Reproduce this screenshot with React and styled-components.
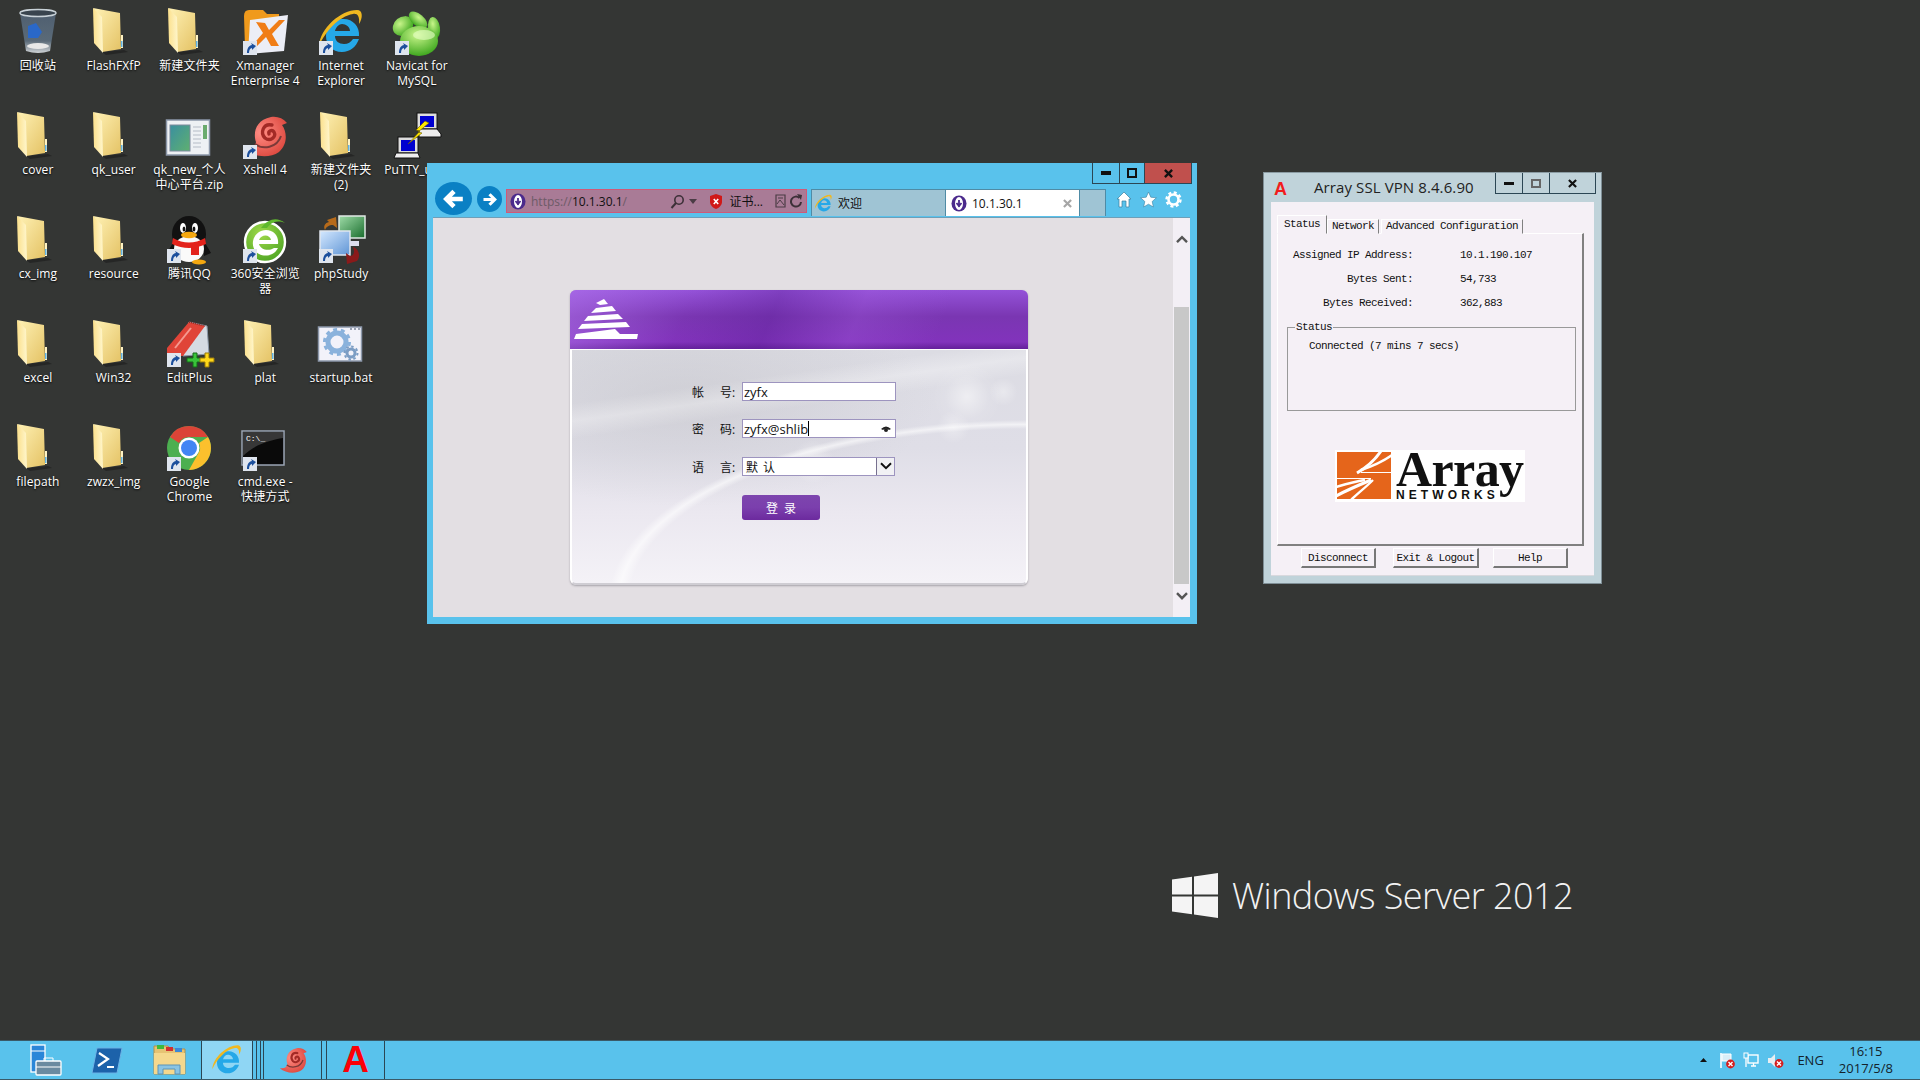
import React from 'react'
import styled, { createGlobalStyle } from 'styled-components'

const UI_FONT = `"Open Sans", "Noto Sans CJK SC", sans-serif`
const DLG_FONT = `"Liberation Mono", "Noto Sans CJK SC", monospace`

const GlobalStyle = createGlobalStyle`
  html, body { margin: 0; padding: 0; background: #343634; }
  #root { width: 1920px; height: 1080px; overflow: hidden; }
`

/* ---------- shell ---------- */
const Screen = styled.div`
  width: 1920px;
  height: 1080px;
  display: flex;
  flex-direction: column;
  font-family: ${UI_FONT};
`
const Desktop = styled.div`
  position: relative;
  flex: 1;
  padding-top: 8px;
  background: #343634;
`
const IconRow = styled.div`
  display: grid;
  grid-template-columns: repeat(6, 75.8px);
  height: 104px;
`
const IconCell = styled.div`
  display: flex;
  flex-direction: column;
  align-items: center;
`
const IconBox = styled.div`
  width: 48px;
  height: 48px;
  svg { display: block; overflow: visible; }
`
const IconLabel = styled.div`
  margin-top: 2px;
  font-size: 12px;
  line-height: 15px;
  letter-spacing: 0.1px;
  color: #fff;
  text-align: center;
  white-space: pre;
  text-shadow: 0 1px 2px #000;
`

/* ---------- browser ---------- */
const BrowserWindow = styled.div`
  position: absolute;
  left: 427px;
  top: 163px;
  width: 770px;
  height: 461px;
  box-sizing: border-box;
  padding: 0 7px 7px 6px;
  display: flex;
  flex-direction: column;
  background: #59c2ec;
  z-index: 2;
`
const CaptionRow = styled.div`
  height: 19px;
  display: flex;
  justify-content: flex-end;
  margin-right: -2px;
`
const CaptionButton = styled.div`
  width: ${p => p.$w}px;
  height: ${p => p.$h || 21}px;
  box-sizing: border-box;
  display: flex;
  align-items: center;
  justify-content: center;
  border: 1px solid #2b4654;
  border-top: 0;
  border-left-width: ${p => (p.$first ? 1 : 0)}px;
  background: ${p => p.$bg || 'transparent'};
`
const Toolbar = styled.div`
  height: 35px;
  display: flex;
  align-items: flex-start;
  padding-left: 2px;
`
const RoundNav = styled.div`
  flex: none;
  width: ${p => p.$w}px;
  height: ${p => p.$h}px;
  margin-top: ${p => p.$top}px;
  margin-right: ${p => p.$gap}px;
  border-radius: 50%;
  background: #0a80c4;
  display: flex;
  align-items: center;
  justify-content: center;
`
const AddressBar = styled.div`
  flex: none;
  width: 301px;
  height: 24px;
  margin-top: 7px;
  box-sizing: border-box;
  padding: 0 4px 0 3px;
  display: flex;
  align-items: center;
  background: #a97b96;
  border: 1px solid #d05a78;
  font-size: 12px;
`
const UrlScheme = styled.span`
  margin-left: 5px;
  color: #6d5a66;
`
const UrlHost = styled.span`
  color: #111;
`
const UrlRest = styled.span`
  color: #6d5a66;
`
const AddressTools = styled.div`
  margin-left: auto;
  display: flex;
  align-items: center;
  gap: 4px;
`
const ToolSpacer = styled.span`
  width: 5px;
`
const CertText = styled.span`
  margin: 0 8px 0 4px;
  color: #111;
  white-space: nowrap;
`
const TabStrip = styled.div`
  flex: none;
  display: flex;
  height: 27px;
  margin: 7px 10px 0 4px;
  font-size: 12px;
`
const Tab = styled.div`
  flex: none;
  width: ${p => p.$w}px;
  box-sizing: border-box;
  display: flex;
  align-items: center;
  gap: 5px;
  padding-left: ${p => p.$pad || 0}px;
  background: ${p => (p.$active ? '#fff' : '#9fc4d4')};
  border: 1px solid #4f8ba5;
  border-bottom: 0;
  border-left-width: ${p => (p.$noLeft ? 0 : 1)}px;
  color: #111;
`
const TabClose = styled.span`
  margin-left: auto;
  margin-right: 7px;
  display: flex;
`
const ToolIcons = styled.div`
  display: flex;
  align-items: center;
  gap: 8px;
  margin-top: 9px;
`
const BrowserBody = styled.div`
  flex: 1;
  display: flex;
  min-height: 0;
  border-top: 1px solid #6e9fb8;
`
const Viewport = styled.div`
  flex: 1;
  padding: 72px 0 0 137px;
  background: #e3dfe3;
`
const ScrollBar = styled.div`
  width: 17px;
  display: flex;
  flex-direction: column;
  align-items: center;
  background: #f3eff5;
`
const ScrollArrow = styled.div`
  height: ${p => p.$h}px;
  box-sizing: border-box;
  padding-top: ${p => p.$pad}px;
  display: flex;
  align-items: flex-start;
  flex: none;
`
const ScrollThumb = styled.div`
  width: 15px;
  height: 277px;
  background: #c8c8c8;
`

/* ---------- login card ---------- */
const LoginCard = styled.div`
  width: 458px;
  height: 295px;
  display: flex;
  flex-direction: column;
  border-radius: 6px;
  box-shadow: 0 1px 2px rgba(90, 90, 100, 0.45);
  overflow: hidden;
`
const CardHeader = styled.div`
  height: 60px;
  flex: none;
  box-sizing: border-box;
  padding: 9px 0 0 4px;
  background:
    linear-gradient(112deg, rgba(180, 120, 240, 0.55) 0, rgba(180, 120, 240, 0) 26%, rgba(90, 30, 150, 0.35) 44%, rgba(160, 90, 220, 0.3) 62%, rgba(90, 30, 150, 0) 80%),
    linear-gradient(180deg, #9452d8 0, #7a36b2 45%, #8233bc 88%, #64209a 100%);
  border-bottom: 1px solid #fff;
`
const CardBody = styled.div`
  flex: 1;
  box-sizing: border-box;
  padding: 32px 0 0 120px;
  display: flex;
  flex-direction: column;
  border: 2px solid #fff;
  border-top: 0;
  border-bottom-color: #cfcdd3;
  border-radius: 0 0 6px 6px;
  background:
    radial-gradient(circle at 87% 20%, rgba(255, 255, 255, 0.5) 0, rgba(255, 255, 255, 0.08) 5%, transparent 8%),
    radial-gradient(circle at 95% 18%, rgba(255, 255, 255, 0.35) 0, transparent 3%),
    radial-gradient(circle at 84% 33%, rgba(255, 255, 255, 0.35) 0, transparent 4%),
    radial-gradient(circle at 53% 48%, rgba(255, 255, 255, 0.45) 0, transparent 8%),
    radial-gradient(ellipse 92% 78% at 100% 108%, transparent 95%, rgba(255, 255, 255, 0.6) 97.5%, transparent 100%),
    linear-gradient(172deg, transparent 18%, rgba(255, 255, 255, 0.3) 24%, transparent 30%),
    radial-gradient(ellipse 55% 45% at 25% 22%, rgba(190, 190, 195, 0.45) 0, transparent 100%),
    linear-gradient(180deg, #dcdce3 0, #dfdee7 42%, #ebe8f0 70%, #f4f2f7 100%);
`
const FormRow = styled.div`
  display: flex;
  align-items: center;
  height: ${p => p.$h || 19}px;
  margin-bottom: ${p => p.$mb}px;
`
const FormLabel = styled.div`
  width: 50px;
  flex: none;
  font-size: 12px;
  word-spacing: 13px;
  color: #111;
  white-space: nowrap;
`
const Field = styled.div`
  box-sizing: border-box;
  width: ${p => p.$w}px;
  height: 100%;
  display: flex;
  align-items: center;
  padding-left: 1px;
  background: #fff;
  border: 1px solid #9d94bf;
  font-size: 13px;
  color: #111;
`
const Caret = styled.span`
  width: 1px;
  height: 15px;
  background: #000;
`
const EyeWrap = styled.span`
  margin-left: auto;
  margin-right: 4px;
  display: flex;
`
const SelectText = styled.span`
  margin-left: 2px;
  flex: 1;
  font-size: 12px;
  word-spacing: 2px;
`
const SelectArrow = styled.span`
  width: 18px;
  height: 100%;
  box-sizing: border-box;
  display: flex;
  align-items: center;
  justify-content: center;
  background: #f1f1f4;
  border-left: 1px solid #77708f;
`
const LoginButton = styled.div`
  width: 78px;
  height: 25px;
  margin-left: 50px;
  display: flex;
  align-items: center;
  justify-content: center;
  border-radius: 3px;
  background: linear-gradient(180deg, #7d45ae 0, #7b3fad 50%, #6c2a9e 100%);
  color: #fff;
  font-size: 12px;
  word-spacing: 3px;
`

/* ---------- vpn dialog ---------- */
const VpnWindow = styled.div`
  position: absolute;
  left: 1263px;
  top: 172px;
  width: 339px;
  height: 412px;
  box-sizing: border-box;
  display: flex;
  flex-direction: column;
  padding: 0 7px 7px;
  background: #c0d3da;
  border: 1px solid #7f8f96;
  border-top-color: #8b9ca3;
`
const VpnTitleBar = styled.div`
  height: 29px;
  flex: none;
  display: flex;
  align-items: flex-start;
  margin-right: -2px;
`
const VpnA = styled.span`
  width: 14px;
  margin: 6px 0 0 3px;
  font: bold 18px/20px "Liberation Sans", sans-serif;
  color: #f21c1c;
`
const VpnTitle = styled.span`
  margin: 4px 0 0 26px;
  font-size: 15px;
  line-height: 20px;
  letter-spacing: 0.1px;
  color: #222;
`
const VpnCaption = styled.div`
  margin-left: auto;
  display: flex;
`
const VpnClient = styled.div`
  flex: 1;
  box-sizing: border-box;
  padding: 13px 0 0 6px;
  background: #f5f0f6;
  font-family: ${DLG_FONT};
  font-size: 11px;
  letter-spacing: -0.6px;
  color: #111;
  border-bottom: 1px solid #d9d9de;
`
const VpnTabs = styled.div`
  display: flex;
  align-items: flex-end;
  height: 19px;
  margin-bottom: -1px;
  position: relative;
`
const VpnTab = styled.div`
  box-sizing: border-box;
  width: ${p => p.$w}px;
  height: ${p => (p.$active ? 19 : 15)}px;
  margin-right: ${p => p.$gap || 0}px;
  padding-left: ${p => (p.$active ? 6 : 4)}px;
  line-height: ${p => (p.$active ? 16 : 13)}px;
  white-space: nowrap;
  border: 1px solid;
  border-color: #fff #808080 transparent #fff;
  background: #f5f0f6;
`
const VpnPanel = styled.div`
  width: 307px;
  height: 313px;
  box-sizing: border-box;
  padding-top: 12px;
  border: 1px solid;
  border-color: #fff #808080 #808080 #fff;
  border-width: 1px 2px 2px 1px;
`
const StatRow = styled.div`
  display: grid;
  grid-template-columns: 135px 1fr;
  column-gap: 47px;
  height: 18px;
  line-height: 18px;
  margin-bottom: 6px;
`
const StatName = styled.div`
  text-align: right;
`
const GroupBox = styled.div`
  position: relative;
  width: 289px;
  height: 84px;
  margin: 15px 0 0 9px;
  box-sizing: border-box;
  padding: 9px 0 0 21px;
  line-height: 18px;
  border: 1px solid #999;
`
const GroupLegend = styled.span`
  position: absolute;
  left: 7px;
  top: -10px;
  padding: 0 1px;
  background: #f5f0f6;
`
const ArrayLogo = styled.div`
  width: 190px;
  height: 52px;
  margin: 39px 0 0 57px;
  box-sizing: border-box;
  padding: 2px 0 0 2px;
  display: flex;
  gap: 5px;
  background: #fff;
`
const LogoWords = styled.div`
  display: flex;
  flex-direction: column;
`
const LogoArray = styled.span`
  font: bold 50px/34px "Liberation Serif", serif;
  height: 34px;
  color: #111;
`
const LogoNetworks = styled.span`
  margin-top: 3px;
  font: bold 12px/12px "Liberation Sans", sans-serif;
  letter-spacing: 4.1px;
  color: #111;
`
const DialogButtons = styled.div`
  display: flex;
  margin: 2px 0 0 24px;
`
const DialogButton = styled.div`
  box-sizing: border-box;
  width: ${p => p.$w}px;
  height: 20px;
  margin-right: ${p => p.$gap || 0}px;
  display: flex;
  align-items: center;
  justify-content: center;
  white-space: nowrap;
  background: #f5f0f6;
  border: 1px solid;
  border-color: #fff #777 #777 #fff;
  border-width: 1px 2px 2px 1px;
`

/* ---------- wallpaper mark ---------- */
const Watermark = styled.div`
  position: absolute;
  left: 1172px;
  top: 873px;
  display: flex;
  align-items: center;
  gap: 12px;
`
const WatermarkText = styled.span`
  font-family: "Open Sans", sans-serif;
  font-weight: 300;
  font-size: 36px;
  line-height: 46px;
  letter-spacing: -0.55px;
  color: #f2f2f2;
  white-space: nowrap;
`

/* ---------- taskbar ---------- */
const Taskbar = styled.div`
  height: 40px;
  flex: none;
  box-sizing: border-box;
  display: flex;
  background: #59c2ec;
  border-top: 1px solid #3a5a68;
  border-bottom: 1px solid #3a5a68;
`
const PinnedIcons = styled.div`
  display: flex;
  padding-left: 15px;
`
const PinnedIcon = styled.div`
  width: 62px;
  display: flex;
  align-items: center;
  justify-content: center;
`
const TaskButton = styled.div`
  flex: none;
  width: ${p => p.$w}px;
  margin-right: ${p => p.$gap || 0}px;
  box-sizing: border-box;
  display: flex;
  align-items: center;
  justify-content: center;
  border-left: 1px solid #2b4654;
  border-right: ${p => (p.$last ? '1px solid #2b4654' : 0)};
  background: ${p => (p.$active ? '#8fd6f4' : 'transparent')};
`
const TaskA = styled.span`
  font: bold 37px/38px "Liberation Sans", sans-serif;
  color: #fb0007;
`
const Tray = styled.div`
  margin-left: auto;
  display: flex;
  align-items: center;
  padding-right: 27px;
  font-size: 13px;
  color: #14232b;
`
const TrayIcons = styled.div`
  display: flex;
  align-items: center;
  gap: 8px;
`
const TrayCaretWrap = styled.span`
  display: flex;
  margin-right: 4px;
`
const TrayLang = styled.span`
  margin: 0 15px 0 13px;
`
const Clock = styled.div`
  text-align: center;
  line-height: 17px;
`

/* ---------- icon drawings ---------- */
const Shortcut = () => (
  <g>
    <rect x="2" y="33" width="14" height="14" fill="#dfe5ee" />
    <path d="M6 45 C6 40 8 37.5 11 37 L10 35 L15 38 L11 42 L11 40 C9 40.5 8 42 8 45 Z" fill="#1c4f9c" />
  </g>
)

const Art = ({ size = 48, view = '0 0 48 48', shortcut, children }) => (
  <svg width={size} height={size} viewBox={view}>
    {children}
    {shortcut && <Shortcut />}
  </svg>
)

const FolderIcon = () => (
  <Art>
    <defs>
      <linearGradient id="fd" x1="0" y1="0" x2="1" y2="1">
        <stop offset="0" stopColor="#fff2b6" />
        <stop offset="1" stopColor="#e4c264" />
      </linearGradient>
      <linearGradient id="ff" x1="0" y1="0" x2="1" y2="0">
        <stop offset="0" stopColor="#fbe08c" />
        <stop offset="1" stopColor="#fff6cc" />
      </linearGradient>
    </defs>
    <polygon points="12,44 34,42 38,44 16,47" fill="#1f201f" opacity="0.7" />
    <polygon points="3,0 30,5 31,41 12,44 10,10" fill="url(#fd)" />
    <polygon points="3,0 12,9 13,45 4,35" fill="url(#ff)" />
    <rect x="31" y="27" width="2" height="13" fill="#fff3c4" />
    <rect x="31" y="33" width="1.5" height="6" fill="#5fb2e8" />
  </Art>
)

const RecycleIcon = () => (
  <Art>
    <defs>
      <linearGradient id="rb" x1="0" y1="0" x2="0" y2="1">
        <stop offset="0" stopColor="#4f5f70" />
        <stop offset="0.7" stopColor="#5a6a78" />
        <stop offset="1" stopColor="#cfd3d6" />
      </linearGradient>
    </defs>
    <path d="M6 5 L42 5 L36 43 Q24 47 12 43 Z" fill="url(#rb)" />
    <ellipse cx="24" cy="5" rx="18" ry="3.5" fill="#39444e" stroke="#c9d2d8" strokeWidth="1.4" />
    <path d="M14 18 L22 15 L28 24 L24 30 L14 30 Z" fill="#2a68c8" />
    <ellipse cx="24" cy="38" rx="11" ry="3" fill="#e8e8e8" />
  </Art>
)

const XmanagerIcon = ({ size, shortcut = true }) => (
  <Art size={size} shortcut={shortcut}>
    <path d="M3 8 Q3 2 8 2 L22 2 L26 6 L38 6 L38 38 L4 40 Z" fill="#f09a1c" />
    <polygon points="9,12 47,7 43,43 7,46" fill="#eceef6" />
    <path d="M15 14 L24 15 L28 22 L38 12 L44 12 L31 26 L38 38 L30 38 L25 29 L15 39 L10 39 L22 25 Z" fill="#f07d16" />
  </Art>
)

const IeIcon = ({ size = 48, shortcut = true }) => (
  <Art size={size} shortcut={shortcut}>
    <path d="M25 11 C35 10 43 18 42 28 L18 28 C18 33 22 36 27 36 C31 36 34 34 36 31 L42 31 C39 39 33 44 25 44 C15 44 9 37 9 28 C9 18 16 11 25 11 Z M18 23 L33 23 C33 19 29 16 25 16 C22 16 19 19 18 23 Z" fill="#25a8e8" fillRule="evenodd" />
    <path d="M2 38 C3 20 24 2 40 2 C46 2 46 10 42 16 C43 8 40 5 36 6 C22 8 8 24 2 38 Z" fill="#f0b820" />
  </Art>
)

const NavicatIcon = ({ shortcut = true }) => (
  <Art shortcut={shortcut}>
    <defs>
      <radialGradient id="nv" cx="0.45" cy="0.3" r="0.8">
        <stop offset="0" stopColor="#c8f58a" />
        <stop offset="1" stopColor="#2c9d10" />
      </radialGradient>
    </defs>
    <ellipse cx="10" cy="18" rx="11" ry="9" transform="rotate(-40 10 18)" fill="url(#nv)" />
    <ellipse cx="25" cy="12" rx="11" ry="6" transform="rotate(40 25 12)" fill="url(#nv)" />
    <ellipse cx="41" cy="20" rx="6" ry="11" transform="rotate(-8 41 20)" fill="url(#nv)" />
    <ellipse cx="26" cy="33" rx="19" ry="15" fill="url(#nv)" />
    <ellipse cx="31" cy="27" rx="11" ry="5" fill="#e7ffc8" opacity="0.6" />
  </Art>
)

const ZipIcon = () => (
  <Art>
    <defs>
      <linearGradient id="zg" x1="0" y1="0" x2="1" y2="1">
        <stop offset="0" stopColor="#3a8fa0" />
        <stop offset="1" stopColor="#5fb070" />
      </linearGradient>
    </defs>
    <rect x="1.5" y="8" width="43" height="35" fill="#eef1f4" stroke="#8a96a8" strokeWidth="1.5" />
    <rect x="5" y="13" width="20" height="26" fill="url(#zg)" stroke="#7c8a9c" />
    <g stroke="#b5bcc6" strokeWidth="1">
      <path d="M28 15 H36 M28 19 H36 M28 23 H36 M28 27 H36 M28 31 H36 M28 35 H36" />
    </g>
    <rect x="38" y="13" width="4" height="14" fill="#6bab6e" />
  </Art>
)

const XshellIcon = ({ size = 48, shortcut = true }) => (
  <Art size={size} shortcut={shortcut}>
    <defs>
      <radialGradient id="xs" cx="0.4" cy="0.4" r="0.8">
        <stop offset="0" stopColor="#ff8d84" />
        <stop offset="1" stopColor="#d63a30" />
      </radialGradient>
    </defs>
    <path d="M3 37 C10 38 14 36 15 30 C12 22 14 8 30 5 C36 4 42 6 46 11 L41 13 C46 20 47 32 38 40 C28 47 12 45 3 37 Z" fill="url(#xs)" />
    <path d="M31 13 C22 11 19 21 24 26 C29 30 36 25 33 20 C31 17 27 19 28 22" fill="none" stroke="#a32a26" strokeWidth="3.4" strokeLinecap="round" />
    <path d="M14 32 C22 38 36 36 40 24" fill="none" stroke="#7a3a38" strokeWidth="2" />
  </Art>
)

const PuttyIcon = () => (
  <Art>
    <g>
      <rect x="24" y="1" width="20" height="16" fill="#ddd" stroke="#111" />
      <rect x="27" y="4" width="14" height="11" fill="#0000d0" />
      <polygon points="26,17 44,17 48,22 48,25 26,25" fill="#eee" stroke="#111" />
      <rect x="5" y="25" width="20" height="16" fill="#ddd" stroke="#111" />
      <rect x="8" y="28" width="14" height="11" fill="#0000d0" />
      <polygon points="3,41 25,41 27,46 1,46" fill="#eee" stroke="#111" />
      <polygon points="32,9 23,18 27,19 15,32 29,21 25,20 36,11" fill="#ffe600" stroke="#6b5a00" strokeWidth="0.6" />
    </g>
  </Art>
)

const QqIcon = () => (
  <Art shortcut>
    <ellipse cx="24" cy="18" rx="17" ry="18" fill="#111" />
    <path d="M9 25 L2 37 L9 40 Z M39 25 L46 37 L39 40 Z" fill="#111" />
    <ellipse cx="24" cy="33" rx="15" ry="13" fill="#fafafa" />
    <ellipse cx="18" cy="12" rx="3" ry="5" fill="#fff" />
    <ellipse cx="30" cy="12" rx="3" ry="5" fill="#fff" />
    <ellipse cx="19" cy="13" rx="1.4" ry="2.6" fill="#111" />
    <ellipse cx="29" cy="13" rx="1.4" ry="2.6" fill="#111" />
    <ellipse cx="24" cy="19" rx="8" ry="3.2" fill="#f5a810" />
    <path d="M8 22 Q24 31 40 22 L41 28 Q24 36 7 28 Z" fill="#e3231c" />
    <rect x="26" y="29" width="8" height="10" fill="#e3231c" />
    <ellipse cx="34" cy="46" rx="7" ry="2.6" fill="#f5a810" />
  </Art>
)

const Ie360Icon = () => (
  <Art shortcut>
    <defs>
      <radialGradient id="s6" cx="0.4" cy="0.3" r="0.9">
        <stop offset="0" stopColor="#a0d94a" />
        <stop offset="1" stopColor="#3c9a1c" />
      </radialGradient>
    </defs>
    <circle cx="24" cy="26" r="20" fill="url(#s6)" stroke="#fff" strokeWidth="2.4" />
    <path d="M25 14 C33 14 38 20 37 28 L18 28 C19 33 27 36 33 32 L37 32 C33 40 24 41 18 38 C8 33 10 15 25 14 Z M18 24 L30 24 C29 18 20 18 18 24 Z" fill="#fff" fillRule="evenodd" />
    <path d="M20 12 C28 2 36 1 44 7 C36 4 30 6 26 12 Z" fill="#5fb82e" />
  </Art>
)

const PhpStudyIcon = () => (
  <Art shortcut>
    <defs>
      <linearGradient id="pg" x1="0" y1="0" x2="1" y2="1">
        <stop offset="0" stopColor="#9fdca8" />
        <stop offset="1" stopColor="#186c2c" />
      </linearGradient>
      <linearGradient id="pb" x1="0" y1="0" x2="1" y2="1">
        <stop offset="0" stopColor="#d4e8ff" />
        <stop offset="1" stopColor="#5f95d5" />
      </linearGradient>
    </defs>
    <rect x="22" y="0" width="26" height="22" fill="url(#pg)" stroke="#dfe8e4" strokeWidth="1.5" />
    <rect x="3" y="15" width="30" height="24" fill="url(#pb)" stroke="#e0e6ee" strokeWidth="1.5" />
    <path d="M10 4 L19 1 L20 12 L16 9 C12 9 9 11 8 14 C6 10 8 7 12 6 Z" fill="#b66a1a" />
    <path d="M40 45 L30 48 L29 37 L33 40 C37 40 38 36 36 31 C42 33 44 40 40 45 Z" fill="#8b1a1a" />
    <rect x="33" y="25" width="9" height="5" fill="#dde" />
  </Art>
)

const EditPlusIcon = () => (
  <Art shortcut>
    <polygon points="24,2 42,6 44,34 18,36" fill="#d5dbe2" stroke="#8a96a5" />
    <polygon points="2,28 24,2 40,6 18,36 2,36" fill="#e04438" />
    <path d="M24 2 L40 6" stroke="#8b2620" strokeWidth="1.5" strokeDasharray="1 1" />
    <path d="M10 28 L26 8" stroke="#f59a90" strokeWidth="2" />
    <path d="M22 38 H28 V33 H32 V38 H37 V42 H32 V47 H28 V42 H22 Z" fill="#39c43a" stroke="#146b18" />
    <path d="M35 38 H40 V33 H44 V38 H49 V42 H44 V47 H40 V42 H35 Z" fill="#ffd819" stroke="#9a7a0a" />
  </Art>
)

const GearWindowIcon = () => (
  <Art>
    <rect x="1.5" y="7" width="43" height="34" fill="#f2f2fa" stroke="#8c98aa" strokeWidth="1.5" />
    <path d="M33 9 h2 M37 9 h2 M41 9 h2" stroke="#7c8798" strokeWidth="1.5" />
    <circle cx="20" cy="22" r="9" fill="none" stroke="#8ab2dc" strokeWidth="5" />
    <circle cx="20" cy="22" r="12.5" fill="none" stroke="#8ab2dc" strokeWidth="3" strokeDasharray="4 3.8" />
    <circle cx="34" cy="33" r="4" fill="none" stroke="#7c9dc4" strokeWidth="3" />
    <circle cx="34" cy="33" r="6.5" fill="none" stroke="#7c9dc4" strokeWidth="2" strokeDasharray="2.5 2.5" />
  </Art>
)

const ChromeIcon = () => (
  <Art shortcut>
    <circle cx="24" cy="24" r="22" fill="#4caf50" />
    <path d="M24 2 A22 22 0 0 1 43 13 L24 13 A11 11 0 0 0 14 19 L5 13 A22 22 0 0 1 24 2 Z" fill="#db4437" />
    <path d="M43 13 A22 22 0 0 1 24 46 L33 30 A11 11 0 0 0 34 19 Z" fill="#fbc02d" />
    <circle cx="24" cy="24" r="10.5" fill="#fff" />
    <circle cx="24" cy="24" r="8" fill="#4285f4" />
  </Art>
)

const CmdText = styled.text`
  font-family: "Liberation Mono", monospace;
  font-size: 8px;
  fill: #fff;
`
const CmdIcon = () => (
  <Art shortcut>
    <rect x="1" y="7" width="42" height="34" fill="#0a0a0a" stroke="#9aa5b4" strokeWidth="1.5" />
    <path d="M2 8 H42 V14 C30 16 14 20 2 32 Z" fill="#4a4a4a" opacity="0.7" />
    <CmdText x="5" y="17">C:\_</CmdText>
  </Art>
)

const ServerManagerIcon = () => (
  <Art size={32} view="0 0 32 32">
    <rect x="1" y="1" width="14" height="27" fill="#2a86d8" stroke="#fff" strokeWidth="1.3" />
    <path d="M1 7 H15" stroke="#fff" />
    <rect x="6" y="17" width="25" height="14" rx="1" fill="#6a8aa0" stroke="#fff" strokeWidth="1.3" />
    <path d="M14 17 V14 H23 V17 M6 23 H31" fill="none" stroke="#fff" strokeWidth="1" />
  </Art>
)

const PowerShellIcon = () => (
  <Art size={32} view="0 0 32 32">
    <polygon points="5,4 30,4 25,29 0,29" fill="#1c62aa" stroke="#6bb2e6" />
    <path d="M7 9 L16 15 L6 22" fill="none" stroke="#fff" strokeWidth="2.2" />
    <path d="M15 23 H22" stroke="#fff" strokeWidth="2" />
  </Art>
)

const ExplorerIcon = () => (
  <Art size={34} view="0 0 34 34">
    <path d="M1 3 H15 L17 6 H32 V31 H1 Z" fill="#e6c373" stroke="#b2914a" />
    <rect x="4" y="2" width="7" height="4" fill="#3cba3c" />
    <rect x="13" y="4" width="7" height="4" fill="#d03030" />
    <rect x="22" y="5" width="7" height="4" fill="#3a88d8" />
    <path d="M1 10 H32 V31 H1 Z" fill="#f5d88d" />
    <path d="M5 31 V22 H27 V31 H22 V26 H10 V31 Z" fill="#8ac4e4" stroke="#5a94b8" />
  </Art>
)

const ArrayFavicon = () => (
  <svg width="16" height="17" viewBox="0 0 16 17">
    <ellipse cx="8" cy="8.5" rx="7.5" ry="8" fill="#4b2a8c" />
    <ellipse cx="8" cy="8.5" rx="4" ry="6.5" fill="#fff" />
    <path d="M8 5 L8 12 M5.5 8 L8 11 L10.5 8" stroke="#4b2a8c" strokeWidth="1.8" fill="none" />
  </svg>
)

const ArrowGlyph = ({ size, dir = 'left' }) => (
  <svg width={size} height={size} viewBox="0 0 20 20" style={dir === 'right' ? { transform: 'scaleX(-1)' } : undefined}>
    <path d="M18 10 H4 M10 3 L3 10 L10 17" fill="none" stroke="#fff" strokeWidth="4.2" />
  </svg>
)

const SearchGlyph = () => (
  <svg width="15" height="15" viewBox="0 0 15 15">
    <circle cx="9" cy="6" r="4.2" fill="none" stroke="#3d3038" strokeWidth="1.6" />
    <path d="M6 9 L1.5 14" stroke="#3d3038" strokeWidth="2" />
  </svg>
)
const CaretGlyph = () => (
  <svg width="8" height="5" viewBox="0 0 8 5"><polygon points="0,0 8,0 4,5" fill="#4b3c45" /></svg>
)
const ShieldGlyph = () => (
  <svg width="12" height="15" viewBox="0 0 12 15">
    <path d="M6 0 L12 2 L12 8 C12 11 9 14 6 15 C3 14 0 11 0 8 L0 2 Z" fill="#d01818" />
    <path d="M3.8 5 L8.2 10 M8.2 5 L3.8 10" stroke="#fff" strokeWidth="1.6" />
  </svg>
)
const CompatGlyph = () => (
  <svg width="11" height="14" viewBox="0 0 11 14">
    <path d="M1 1 H10 V13 H1 Z" fill="none" stroke="#4b3c45" strokeWidth="1.2" />
    <path d="M2 10 L5 6 L9 11 M3 4 H8" fill="none" stroke="#4b3c45" />
  </svg>
)
const RefreshGlyph = () => (
  <svg width="12" height="14" viewBox="0 0 12 14">
    <path d="M9.5 4 A5 5 0 1 0 11 8" fill="none" stroke="#3d3038" strokeWidth="2" />
    <polygon points="7,0 12,1 11,6" fill="#3d3038" />
  </svg>
)
const CloseGlyph = ({ size = 9, color = '#a6a6a6', width = 2.4 }) => (
  <svg width={size} height={size} viewBox="0 0 10 10">
    <path d="M1 1 L9 9 M9 1 L1 9" stroke={color} strokeWidth={width} />
  </svg>
)
const HomeGlyph = () => (
  <svg width="16" height="17" viewBox="0 0 16 17">
    <path d="M8 1 L15 8 L13 8 L13 16 L10 16 L10 10 L6 10 L6 16 L3 16 L3 8 L1 8 Z" fill="#fff" stroke="#3a7f9f" strokeWidth="0.7" />
  </svg>
)
const StarGlyph = () => (
  <svg width="17" height="17" viewBox="0 0 17 17">
    <polygon points="8.5,1 10.8,6.2 16.4,6.8 12.2,10.5 13.4,16 8.5,13.2 3.6,16 4.8,10.5 0.6,6.8 6.2,6.2" fill="#fff" stroke="#3a7f9f" strokeWidth="0.6" />
  </svg>
)
const GearGlyph = () => (
  <svg width="17" height="17" viewBox="0 0 17 17">
    <circle cx="8.5" cy="8.5" r="5" fill="none" stroke="#fff" strokeWidth="2.6" />
    <circle cx="8.5" cy="8.5" r="7" fill="none" stroke="#fff" strokeWidth="2.4" strokeDasharray="3 2.5" />
  </svg>
)
const EyeGlyph = () => (
  <svg width="10" height="8" viewBox="0 0 10 8">
    <path d="M0 4 Q5 -1 10 4 L8 5 Q5 2 2 5 Z" fill="#222" />
    <circle cx="5" cy="5" r="2" fill="#222" />
  </svg>
)
const ChevronGlyph = ({ up, size = 12, color = '#111', width = 2 }) => (
  <svg width={size} height={size * 0.7} viewBox="0 0 12 8">
    <path d={up ? 'M1 7 L6 2 L11 7' : 'M1 1 L6 6 L11 1'} fill="none" stroke={color} strokeWidth={width} />
  </svg>
)
const PyramidLogo = () => (
  <svg width="64" height="40" viewBox="0 0 64 40">
    <g fill="#fff">
      <polygon points="30,0 34,5 26,6 22,4" />
      <polygon points="22,9 38,7 42,12 17,14" />
      <polygon points="14,17 44,15 49,20 10,22" />
      <polygon points="8,25 52,23 56,28 4,30" />
      <polygon points="2,35 41,30 46,35 64,35 63,40 0,40" />
    </g>
  </svg>
)
const OrangeMark = () => (
  <svg width="54" height="47" viewBox="0 0 54 47">
    <rect width="54" height="47" fill="#e5651b" />
    <g fill="none" stroke="#fff">
      <path d="M20 21 C32 14 38 8 44 -1" strokeWidth="3" />
      <path d="M24 18 C36 14 48 8 55 3" strokeWidth="2.4" />
      <path d="M34 28 C22 33 10 38 -1 44" strokeWidth="3" />
      <path d="M28 28 C16 30 6 33 -1 35" strokeWidth="2.4" />
      <path d="M36 28 C28 36 20 42 14 48" strokeWidth="2.4" />
    </g>
    <polygon points="24,20 54,20 54,21 24,21" fill="#fff" />
    <polygon points="0,26 34,26 34,27 0,27" fill="#fff" />
  </svg>
)
const WindowsPanes = () => (
  <svg width="48" height="46" viewBox="0 0 48 46">
    <polygon points="0,6.5 20,3.8 20,21.5 0,21.5" fill="#f4f4f4" />
    <polygon points="22,3.5 46,0 46,21.5 22,21.5" fill="#f4f4f4" />
    <polygon points="0,23.5 20,23.5 20,41.2 0,38.5" fill="#f4f4f4" />
    <polygon points="22,23.5 46,23.5 46,45 22,41.5" fill="#f4f4f4" />
  </svg>
)
const TrayFlag = () => (
  <svg width="16" height="17" viewBox="0 0 16 17">
    <path d="M2 1 V16" stroke="#fff" strokeWidth="1.6" />
    <path d="M3 2 H12 V9 H3 Z" fill="#d9eef8" stroke="#fff" />
    <circle cx="11.5" cy="12" r="4.4" fill="#d51e1e" />
    <path d="M9.5 10 L13.5 14 M13.5 10 L9.5 14" stroke="#fff" strokeWidth="1.4" />
  </svg>
)
const TrayNetwork = () => (
  <svg width="16" height="17" viewBox="0 0 16 17">
    <rect x="5" y="3" width="10" height="8" fill="none" stroke="#fff" strokeWidth="1.4" />
    <rect x="1" y="1" width="4" height="5" fill="#59c2ec" stroke="#fff" />
    <path d="M3 6 V15 M8 14 H13 M10.5 11 V14" stroke="#fff" strokeWidth="1.3" />
  </svg>
)
const TraySpeaker = () => (
  <svg width="17" height="17" viewBox="0 0 17 17">
    <path d="M1 6 H4 L8 2 V15 L4 11 H1 Z" fill="#e8eef2" />
    <circle cx="12" cy="11.5" r="4.4" fill="#d51e1e" />
    <path d="M10 9.5 L14 13.5 M14 9.5 L10 13.5" stroke="#fff" strokeWidth="1.4" />
  </svg>
)
const TrayCaret = () => (
  <svg width="7" height="4" viewBox="0 0 7 4"><polygon points="3.5,0 7,4 0,4" fill="#111" /></svg>
)

/* ---------- data ---------- */
const DESKTOP_ROWS = [
  [
    { label: '回收站', Icon: RecycleIcon },
    { label: 'FlashFXfP', Icon: FolderIcon },
    { label: '新建文件夹', Icon: FolderIcon },
    { label: 'Xmanager\nEnterprise 4', Icon: XmanagerIcon },
    { label: 'Internet\nExplorer', Icon: IeIcon },
    { label: 'Navicat for\nMySQL', Icon: NavicatIcon },
  ],
  [
    { label: 'cover', Icon: FolderIcon },
    { label: 'qk_user', Icon: FolderIcon },
    { label: 'qk_new_个人\n中心平台.zip', Icon: ZipIcon },
    { label: 'Xshell 4', Icon: XshellIcon },
    { label: '新建文件夹\n(2)', Icon: FolderIcon },
    { label: 'PuTTY_user', Icon: PuttyIcon },
  ],
  [
    { label: 'cx_img', Icon: FolderIcon },
    { label: 'resource', Icon: FolderIcon },
    { label: '腾讯QQ', Icon: QqIcon },
    { label: '360安全浏览\n器', Icon: Ie360Icon },
    { label: 'phpStudy', Icon: PhpStudyIcon },
  ],
  [
    { label: 'excel', Icon: FolderIcon },
    { label: 'Win32', Icon: FolderIcon },
    { label: 'EditPlus', Icon: EditPlusIcon },
    { label: 'plat', Icon: FolderIcon },
    { label: 'startup.bat', Icon: GearWindowIcon },
  ],
  [
    { label: 'filepath', Icon: FolderIcon },
    { label: 'zwzx_img', Icon: FolderIcon },
    { label: 'Google\nChrome', Icon: ChromeIcon },
    { label: 'cmd.exe -\n快捷方式', Icon: CmdIcon },
  ],
]

const STATS = [
  ['Assigned IP Address:', '10.1.190.107'],
  ['Bytes Sent:', '54,733'],
  ['Bytes Received:', '362,883'],
]

const Browser = () => (
  <BrowserWindow>
    <CaptionRow>
      <CaptionButton $w={28} $first><svg width="10" height="4"><rect width="10" height="4" fill="#111" /></svg></CaptionButton>
      <CaptionButton $w={25}><svg width="10" height="10"><rect x="1" y="1" width="8" height="8" fill="none" stroke="#111" strokeWidth="2" /></svg></CaptionButton>
      <CaptionButton $w={47} $bg="#c0504d"><CloseGlyph size={9} color="#111" width={2.6} /></CaptionButton>
    </CaptionRow>
    <Toolbar>
      <RoundNav $w={37} $h={33} $top={0} $gap={5}><ArrowGlyph size={22} /></RoundNav>
      <RoundNav $w={25} $h={26} $top={4} $gap={4}><ArrowGlyph size={15} dir="right" /></RoundNav>
      <AddressBar>
        <ArrayFavicon />
        <UrlScheme>https://</UrlScheme>
        <UrlHost>10.1.30.1</UrlHost>
        <UrlRest>/</UrlRest>
        <AddressTools>
          <SearchGlyph />
          <CaretGlyph />
          <ToolSpacer />
          <ShieldGlyph />
          <CertText>证书...</CertText>
          <CompatGlyph />
          <RefreshGlyph />
        </AddressTools>
      </AddressBar>
      <TabStrip>
        <Tab $w={135} $pad={2}><IeIcon size={19} shortcut={false} />欢迎</Tab>
        <Tab $w={134} $pad={5} $active $noLeft>
          <ArrayFavicon />10.1.30.1
          <TabClose><CloseGlyph /></TabClose>
        </Tab>
        <Tab $w={26} $noLeft />
      </TabStrip>
      <ToolIcons>
        <HomeGlyph />
        <StarGlyph />
        <GearGlyph />
      </ToolIcons>
    </Toolbar>
    <BrowserBody>
      <Viewport>
        <LoginCard>
          <CardHeader><PyramidLogo /></CardHeader>
          <CardBody>
            <FormRow $mb={18}>
              <FormLabel>帐 号:</FormLabel>
              <Field $w={154}>zyfx</Field>
            </FormRow>
            <FormRow $mb={19}>
              <FormLabel>密 码:</FormLabel>
              <Field $w={154}>zyfx@shlib<Caret /><EyeWrap><EyeGlyph /></EyeWrap></Field>
            </FormRow>
            <FormRow $mb={19}>
              <FormLabel>语 言:</FormLabel>
              <Field $w={153}>
                <SelectText>默 认</SelectText>
                <SelectArrow><ChevronGlyph /></SelectArrow>
              </Field>
            </FormRow>
            <LoginButton>登 录</LoginButton>
          </CardBody>
        </LoginCard>
      </Viewport>
      <ScrollBar>
        <ScrollArrow $h={89} $pad={17}><ChevronGlyph up size={12} color="#555" width={2.4} /></ScrollArrow>
        <ScrollThumb />
        <ScrollArrow $h={33} $pad={8}><ChevronGlyph size={12} color="#555" width={2.4} /></ScrollArrow>
      </ScrollBar>
    </BrowserBody>
  </BrowserWindow>
)

const VpnDialog = () => (
  <VpnWindow>
    <VpnTitleBar>
      <VpnA>A</VpnA>
      <VpnTitle>Array SSL VPN 8.4.6.90</VpnTitle>
      <VpnCaption>
        <CaptionButton $w={28} $first><svg width="10" height="3"><rect width="10" height="3" fill="#111" /></svg></CaptionButton>
        <CaptionButton $w={27}><svg width="10" height="9"><rect x="1" y="1" width="8" height="7" fill="none" stroke="#666" strokeWidth="2" /></svg></CaptionButton>
        <CaptionButton $w={46}><CloseGlyph size={9} color="#111" width={2.4} /></CaptionButton>
      </VpnCaption>
    </VpnTitleBar>
    <VpnClient>
      <VpnTabs>
        <VpnTab $w={50} $active>Status</VpnTab>
        <VpnTab $w={52} $gap={2}>Network</VpnTab>
        <VpnTab $w={142}>Advanced Configuration</VpnTab>
      </VpnTabs>
      <VpnPanel>
        {STATS.map(([name, value]) => (
          <StatRow key={name}>
            <StatName>{name}</StatName>
            <div>{value}</div>
          </StatRow>
        ))}
        <GroupBox>
          <GroupLegend>Status</GroupLegend>
          Connected (7 mins 7 secs)
        </GroupBox>
        <ArrayLogo>
          <OrangeMark />
          <LogoWords>
            <LogoArray>Array</LogoArray>
            <LogoNetworks>NETWORKS</LogoNetworks>
          </LogoWords>
        </ArrayLogo>
      </VpnPanel>
      <DialogButtons>
        <DialogButton $w={75} $gap={17}>Disconnect</DialogButton>
        <DialogButton $w={86} $gap={14}>Exit &amp; Logout</DialogButton>
        <DialogButton $w={75}>Help</DialogButton>
      </DialogButtons>
    </VpnClient>
  </VpnWindow>
)

export default function App() {
  return (
    <>
      <GlobalStyle />
      <Screen>
        <Desktop>
          {DESKTOP_ROWS.map((row, r) => (
            <IconRow key={r}>
              {row.map(({ label, Icon }) => (
                <IconCell key={label}>
                  <IconBox><Icon /></IconBox>
                  <IconLabel>{label}</IconLabel>
                </IconCell>
              ))}
            </IconRow>
          ))}
          <Browser />
          <VpnDialog />
          <Watermark>
            <WindowsPanes />
            <WatermarkText>Windows Server 2012</WatermarkText>
          </Watermark>
        </Desktop>
        <Taskbar>
          <PinnedIcons>
            <PinnedIcon><ServerManagerIcon /></PinnedIcon>
            <PinnedIcon><PowerShellIcon /></PinnedIcon>
            <PinnedIcon><ExplorerIcon /></PinnedIcon>
          </PinnedIcons>
          <TaskButton $w={51} $active><IeIcon size={32} shortcut={false} /></TaskButton>
          <TaskButton $w={4} />
          <TaskButton $w={5} $gap={2} $last />
          <TaskButton $w={59} $gap={4} $last><XshellIcon size={30} shortcut={false} /></TaskButton>
          <TaskButton $w={59} $last><TaskA>A</TaskA></TaskButton>
          <Tray>
            <TrayIcons>
              <TrayCaretWrap><TrayCaret /></TrayCaretWrap>
              <TrayFlag />
              <TrayNetwork />
              <TraySpeaker />
            </TrayIcons>
            <TrayLang>ENG</TrayLang>
            <Clock>16:15<br />2017/5/8</Clock>
          </Tray>
        </Taskbar>
      </Screen>
    </>
  )
}
